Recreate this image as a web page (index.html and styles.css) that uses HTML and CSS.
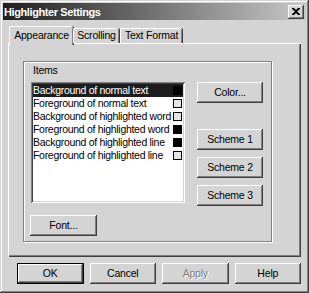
FILE: index.html
```html
<!DOCTYPE html>
<html>
<head>
<meta charset="utf-8">
<link rel="stylesheet" href="styles.css">
</head>
<body>
<div class="window">
  <div class="titlebar">
    <span class="title">Highlighter Settings</span>
    <span class="close"><svg width="8" height="7" viewBox="0 0 8 7"><path d="M0 0h2l2 2 2-2h2v1L5 3.5 8 6v1H6L4 5 2 7H0V6l3-2.5L0 1z" fill="#000"/></svg></span>
  </div>
  <div class="content">
    <div class="tabs">
      <div class="tab active t1">Appearance</div>
      <div class="tab t2">Scrolling</div>
      <div class="tab t3">Text Format</div>
    </div>
    <div class="panel">
      <div class="group">
        <div class="label">Items</div>
        <div class="main">
          <div class="list">
            <div class="item sel"><span>Background of normal text</span><i class="sw dark"></i></div>
            <div class="item"><span>Foreground of normal text</span><i class="sw light"></i></div>
            <div class="item"><span>Background of highlighted word</span><i class="sw light"></i></div>
            <div class="item"><span>Foreground of highlighted word</span><i class="sw dark"></i></div>
            <div class="item"><span>Background of highlighted line</span><i class="sw dark"></i></div>
            <div class="item"><span>Foreground of highlighted line</span><i class="sw light"></i></div>
          </div>
          <div class="side">
            <div class="btn color">Color...</div>
            <div class="btn scheme s1">Scheme 1</div>
            <div class="btn scheme">Scheme 2</div>
            <div class="btn scheme">Scheme 3</div>
          </div>
        </div>
        <div class="btn font">Font...</div>
      </div>
    </div>
    <div class="footer">
      <div class="btn default">OK</div>
      <div class="btn">Cancel</div>
      <div class="btn disabled">Apply</div>
      <div class="btn">Help</div>
    </div>
  </div>
</div>
</body>
</html>
```
FILE: styles.css
```css
* { box-sizing: border-box; }
html, body { margin: 0; padding: 0; background: #d4d4d4; }
body {
  font-family: "Liberation Sans", Arial, sans-serif;
  font-size: 10.5px;
  letter-spacing: -0.2px;
  color: #000;
}
.window {
  width: 309px;
  height: 293px;
  padding: 3px;
  background: #d4d4d4;
  box-shadow: inset -1px -1px #404040, inset 1px 1px #d4d4d4, inset -2px -2px #808080, inset 2px 2px #fff;
  display: flex;
  flex-direction: column;
}
.titlebar {
  height: 17px;
  background: linear-gradient(to right, #1e1e1e, #c8c8c8);
  display: flex;
  align-items: center;
  justify-content: space-between;
  padding: 0 2px 0 1px;
}
.title {
  color: #fff;
  font-weight: bold;
  font-size: 11px;
  letter-spacing: -0.4px;
}
.close {
  width: 16px;
  height: 14px;
  background: #d4d4d4;
  box-shadow: inset -1px -1px #404040, inset 1px 1px #fff, inset -2px -2px #808080;
  display: flex;
  align-items: center;
  justify-content: center;
}
.close svg { display: block; }
.content {
  flex: 1;
  padding: 6px 5px 0 5px;
}
.tabs {
  display: flex;
  align-items: flex-end;
  height: 17px;
  padding-left: 1px;
  position: relative;
  z-index: 1;
}
.tab {
  height: 15px;
  line-height: 13px;
  text-align: center;
  border-top: 1px solid #fff;
  border-left: 1px solid #fff;
  box-shadow: inset -1px 0 #808080, 1px 0 #404040;
  border-radius: 2px 2px 0 0;
  background: #d4d4d4;
}
.t1 { width: 64px; }
.t2 { width: 46px; }
.t3 { width: 62px; margin-left: 1px; }
.tab.active {
  height: 19px;
  margin-bottom: -2px;
  line-height: 15px;
  padding-top: 1px;
}
.panel {
  width: 293px;
  height: 214px;
  padding: 18px 0 0 15px;
  box-shadow: inset 1px 1px #fff, inset -1px -1px #404040, inset -2px -2px #808080;
}
.group {
  width: 249px;
  height: 181px;
  border: 1px solid #808080;
  box-shadow: inset 1px 1px #fff, 1px 1px #fff;
  padding: 2px 0 0 7px;
}
.label {
  height: 13px;
  line-height: 13px;
  margin-left: 2px;
}
.main {
  display: flex;
  margin-top: 5px;
}
.list {
  width: 154px;
  height: 121px;
  background: #fff;
  padding: 2px;
  box-shadow: inset 1px 1px #808080, inset -1px -1px #fff, inset 2px 2px #404040, inset -2px -2px #d4d4d4;
}
.item {
  height: 13px;
  line-height: 13px;
  display: flex;
  align-items: center;
  justify-content: space-between;
  padding: 0 1px 0 0;
  white-space: nowrap;
  letter-spacing: -0.3px;
}
.item.sel {
  background: #1c1c1c;
  color: #fff;
}
.sw {
  width: 9px;
  height: 9px;
  border: 1px solid #000;
  flex: none;
}
.sw.dark { background: #000; }
.sw.light { background: #e4e4e4; }
.side {
  margin-left: 12px;
  display: flex;
  flex-direction: column;
}
.btn {
  width: 67px;
  height: 21px;
  line-height: 21px;
  text-align: center;
  background: #d4d4d4;
  box-shadow: inset -1px -1px #404040, inset 1px 1px #fff, inset -2px -2px #808080;
}
.side .btn { width: 66px; }
.scheme { margin-top: 7px; }
.scheme.s1 { margin-top: 26px; }
.font {
  margin-top: 9px;
  margin-left: -1px;
}
.footer {
  display: flex;
  gap: 6px;
  padding: 6px 0 0 9px;
}
.btn.default {
  border: 1px solid #000;
  line-height: 19px;
}
.btn.disabled {
  color: #808080;
  text-shadow: 1px 1px #fff;
}
```
